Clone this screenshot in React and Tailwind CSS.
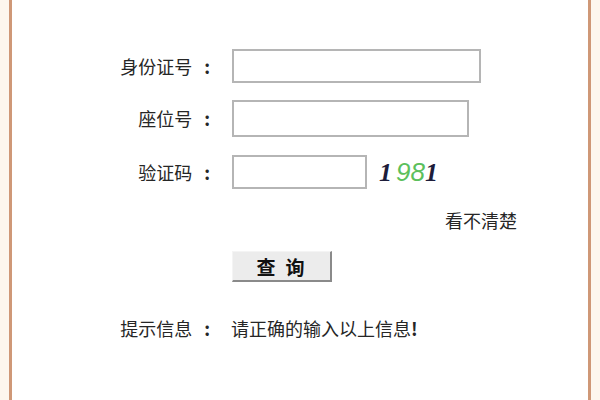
function Label({ children }) {
  return (
    <div className="w-[200px] flex justify-end items-center">
      <span>{children}</span>
      <span className="ml-[12px] mr-[2px] font-bold">:</span>
    </div>
  );
}

export default function App() {
  const font = { fontFamily: '"Noto Sans CJK SC", "Liberation Sans", sans-serif' };
  return (
    <div className="w-[600px] h-[400px] bg-[#fdf7ee] px-[9px] overflow-hidden" style={font}>
      <div className="h-full bg-white border-x-[3px] border-[#cf9877] pt-[49px] text-[18px] text-[#262626]">
        {/* 身份证号 */}
        <div className="flex items-center h-[34px]">
          <Label>身份证号</Label>
          <input className="ml-[20px] w-[249px] h-[34px] border-2 border-[#b5b5b5] bg-white outline-none" />
        </div>

        {/* 座位号 */}
        <div className="flex items-center h-[37px] mt-[17px]">
          <Label>座位号</Label>
          <input className="ml-[20px] w-[237px] h-[37px] border-2 border-[#b5b5b5] bg-white outline-none" />
        </div>

        {/* 验证码 */}
        <div className="flex items-center h-[34px] mt-[18px]">
          <Label>验证码</Label>
          <input className="ml-[20px] w-[135px] h-[34px] border-2 border-[#b5b5b5] bg-white outline-none" />
          <div className="ml-[12px] flex items-baseline text-[26px] italic leading-none">
            <span className="text-[#1d1d3a] font-bold" style={{ fontFamily: '"Liberation Serif", serif' }}>1</span>
            <span className="text-[#5cc05c] ml-[4px]" style={{ fontFamily: '"Liberation Sans", sans-serif' }}>98</span>
            <span className="text-[#1d1d3a] font-bold" style={{ fontFamily: '"Liberation Serif", serif' }}>1</span>
          </div>
        </div>

        <div className="flex justify-end pr-[71px] mt-[19px] h-[24px] items-center">看不清楚</div>

        {/* 查询 */}
        <div className="flex mt-[19px] pl-[220px]">
          <button className="w-[100px] h-[31px] bg-[#ececec] border border-t-[#f4f4f4] border-l-[#f4f4f4] border-r-2 border-b-2 border-r-[#8a8a8a] border-b-[#8a8a8a] font-bold text-[19px] text-[#111] tracking-[10px] pl-[8px] leading-none">
            查询
          </button>
        </div>

        {/* 提示信息 */}
        <div className="flex items-center mt-[34px] h-[24px]">
          <Label>提示信息</Label>
          <div className="ml-[19px]">请正确的输入以上信息<span className="font-bold">!</span></div>
        </div>
      </div>
    </div>
  );
}
